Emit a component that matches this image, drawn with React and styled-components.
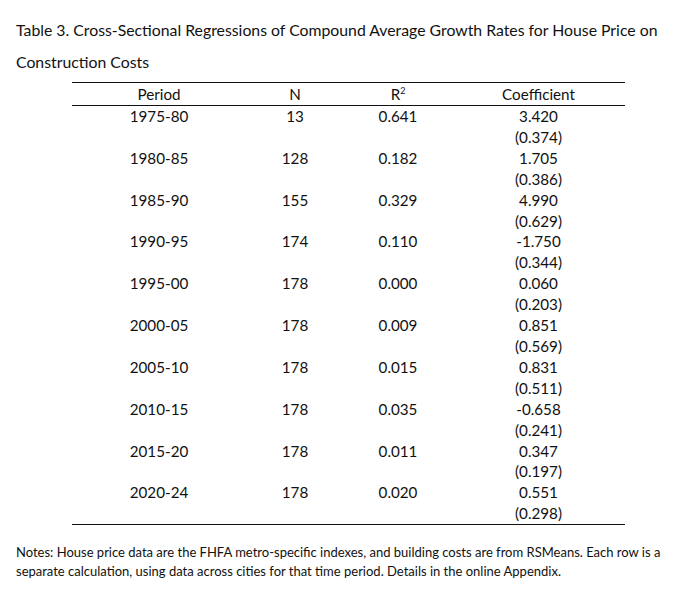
import React from "react";
import styled, { createGlobalStyle } from "styled-components";

const rows = [
  ["1975-80", "13", "0.641", "3.420", "(0.374)"],
  ["1980-85", "128", "0.182", "1.705", "(0.386)"],
  ["1985-90", "155", "0.329", "4.990", "(0.629)"],
  ["1990-95", "174", "0.110", "-1.750", "(0.344)"],
  ["1995-00", "178", "0.000", "0.060", "(0.203)"],
  ["2000-05", "178", "0.009", "0.851", "(0.569)"],
  ["2005-10", "178", "0.015", "0.831", "(0.511)"],
  ["2010-15", "178", "0.035", "-0.658", "(0.241)"],
  ["2015-20", "178", "0.011", "0.347", "(0.197)"],
  ["2020-24", "178", "0.020", "0.551", "(0.298)"],
];

export default function App() {
  return (
    <>
      <GlobalStyle />
      <Page>
        <Title>
          Table 3. Cross-Sectional Regressions of Compound Average Growth Rates for House Price on
          Construction Costs
        </Title>
        <Table>
          <HeadRow>
            <Cell>Period</Cell>
            <Cell>N</Cell>
            <Cell>
              R<Sup>2</Sup>
            </Cell>
            <Cell>Coefficient</Cell>
          </HeadRow>
          {rows.map((r) => (
            <Row key={r[0]}>
              <Cell>{r[0]}</Cell>
              <Cell>{r[1]}</Cell>
              <Cell>{r[2]}</Cell>
              <Cell>
                {r[3]}
                <br />
                {r[4]}
              </Cell>
            </Row>
          ))}
        </Table>
        <Notes>
          Notes: House price data are the FHFA metro-specific indexes, and building costs are from
          RSMeans. Each row is a separate calculation, using data across cities for that time
          period. Details in the online Appendix.
        </Notes>
      </Page>
    </>
  );
}

const GlobalStyle = createGlobalStyle`
  body {
    margin: 0;
    background: #fff;
    color: #111;
    font-family: Lato, "Open Sans", sans-serif;
  }
`;

const Page = styled.div`
  width: 698px;
  height: 596px;
  padding: 14px 0 0 16px;
  box-sizing: border-box;
`;

const Title = styled.div`
  font-size: 15.8px;
  line-height: 32px;
  width: 660px;
`;

const Table = styled.div`
  margin: 4px 0 0 56px;
  width: 553px;
  border-top: 1px solid #111;
  border-bottom: 1.5px solid #111;
`;

const HeadRow = styled.div`
  display: grid;
  grid-template-columns: 174px 98px 108px 173px;
  height: 22px;
  line-height: 22px;
  border-bottom: 1px solid #111;
`;

const Row = styled.div`
  display: grid;
  grid-template-columns: 174px 98px 108px 173px;
  line-height: 20.9px;
`;

const Cell = styled.div`
  font-size: 15.2px;
  text-align: center;
`;

const Sup = styled.sup`
  font-size: 9px;
  line-height: 0;
  vertical-align: 6px;
`;

const Notes = styled.div`
  margin-top: 18px;
  font-size: 13px;
  line-height: 19px;
  width: 670px;
`;
